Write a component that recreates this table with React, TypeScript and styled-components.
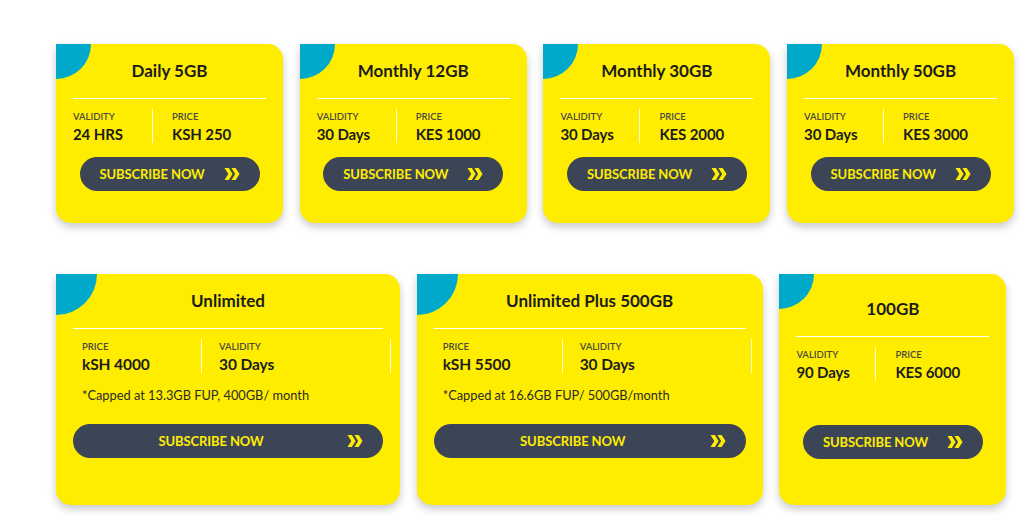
import React from "react";
import styled, { createGlobalStyle } from "styled-components";

const Global = createGlobalStyle`
  html, body { margin: 0; padding: 0; background: #ffffff; }
  body { font-family: Lato, "Open Sans", Arial, sans-serif; }
  * { box-sizing: border-box; }
`;

const Page = styled.div`
  padding: 44px 0 25px 56px;
  display: flex;
  flex-direction: column;
  gap: 51px;
`;

const Row = styled.div`
  display: flex;
  gap: 16.7px;
`;

const Card = styled.div<{ $w: number; $h: number; $top: number; $corner: number }>`
  position: relative;
  width: ${(p) => p.$w}px;
  height: ${(p) => p.$h}px;
  flex: none;
  background: #ffed00;
  border-radius: 0 15px 15px 15px;
  box-shadow: 0 4px 9px rgba(0, 0, 0, 0.22);
  padding: ${(p) => p.$top}px 17px 0;
  display: flex;
  flex-direction: column;
  overflow: hidden;

  &::before {
    content: "";
    position: absolute;
    left: -${(p) => p.$corner}px;
    top: -${(p) => p.$corner}px;
    width: ${(p) => p.$corner * 2}px;
    height: ${(p) => p.$corner * 2}px;
    border-radius: 50%;
    background: #00a9c9;
  }
`;

const Title = styled.h3`
  margin: 0 0 16px;
  font-size: 17px;
  line-height: 22px;
  font-weight: 700;
  color: #1c1c1c;
  text-align: center;
`;

const Divider = styled.div`
  height: 1px;
  background: #ffffff;
  margin-bottom: 10px;
`;

const Info = styled.div`
  display: flex;
`;

const Col = styled.div<{ $w: number; $pl: number; $line?: boolean }>`
  width: ${(p) => p.$w}px;
  flex: none;
  padding: 2px 0 0 ${(p) => p.$pl}px;
  height: 34px;
  border-right: ${(p) => (p.$line ? "1.5px solid rgba(255,255,255,0.85)" : "none")};
`;

const Label = styled.div`
  font-size: 9.5px;
  line-height: 12px;
  font-weight: 600;
  color: #4a4a40;
  text-transform: uppercase;
  margin-bottom: 2px;
`;

const Value = styled.div<{ $big?: boolean }>`
  font-size: ${(p) => (p.$big ? "15.5px" : "15px")};
  line-height: 18px;
  font-weight: 700;
  color: #1c1c1c;
  white-space: nowrap;
  letter-spacing: -0.1px;
`;

const Note = styled.div`
  margin-top: 14px;
  padding-left: 9px;
  font-size: 12.8px;
  line-height: 16px;
  color: #2a2a2a;
`;

const Button = styled.button<{ $full?: boolean; $mt: number }>`
  margin: ${(p) => p.$mt}px auto 0;
  width: ${(p) => (p.$full ? "100%" : "180px")};
  height: 34px;
  border: none;
  border-radius: 17px;
  background: #3c4555;
  color: #ffed00;
  font-family: Lato, Arial, sans-serif;
  font-weight: 700;
  font-size: 13px;
  display: flex;
  align-items: center;
  justify-content: space-between;
  padding: 0 20px;
  gap: 18px;
  cursor: pointer;
`;

const ButtonText = styled.span<{ $center?: boolean }>`
  flex: ${(p) => (p.$center ? 1 : "none")};
  text-align: center;
  letter-spacing: -0.1px;
`;

const Chevrons = () => (
  <svg width="16" height="12" viewBox="0 0 16 12" fill="#ffed00">
    <path d="M0.5 0 H4.8 L8.6 6 L4.8 12 H0.5 L4.3 6 Z" />
    <path d="M7.4 0 H11.7 L15.5 6 L11.7 12 H7.4 L11.2 6 Z" />
  </svg>
);

type Small = { title: string; validity: string; price: string };

const smallPlans: Small[] = [
  { title: "Daily 5GB", validity: "24 HRS", price: "KSH 250" },
  { title: "Monthly 12GB", validity: "30 Days", price: "KES 1000" },
  { title: "Monthly 30GB", validity: "30 Days", price: "KES 2000" },
  { title: "Monthly 50GB", validity: "30 Days", price: "KES 3000" },
];

const SmallCard = ({ p, h = 179, top = 16, btnTop = 14 }: { p: Small; h?: number; top?: number; btnTop?: number }) => (
  <Card $w={227} $h={h} $top={top} $corner={35}>
    <Title>{p.title}</Title>
    <Divider />
    <Info>
      <Col $w={80} $pl={0} $line>
        <Label>Validity</Label>
        <Value>{p.validity}</Value>
      </Col>
      <Col $w={110} $pl={19}>
        <Label>Price</Label>
        <Value>{p.price}</Value>
      </Col>
    </Info>
    <Button $mt={btnTop}>
      <ButtonText>SUBSCRIBE NOW</ButtonText>
      <Chevrons />
    </Button>
  </Card>
);

type Wide = { title: string; price: string; note: string; w: number };

const widePlans: Wide[] = [
  { title: "Unlimited", price: "kSH 4000", note: "*Capped at 13.3GB FUP, 400GB/ month", w: 344 },
  { title: "Unlimited Plus 500GB", price: "kSH 5500", note: "*Capped at 16.6GB FUP/ 500GB/month", w: 346 },
];

const WideCard = ({ p }: { p: Wide }) => (
  <Card $w={p.w} $h={231} $top={16} $corner={41}>
    <Title>{p.title}</Title>
    <Divider />
    <Info>
      <Col $w={129} $pl={9} $line>
        <Label>Price</Label>
        <Value $big>{p.price}</Value>
      </Col>
      <Col $w={189} $pl={17} $line>
        <Label>Validity</Label>
        <Value $big>30 Days</Value>
      </Col>
    </Info>
    <Note>{p.note}</Note>
    <Button $full $mt={21}>
      <ButtonText $center>SUBSCRIBE NOW</ButtonText>
      <Chevrons />
    </Button>
  </Card>
);

export default function App() {
  return (
    <>
      <Global />
      <Page>
        <Row>
          {smallPlans.map((p) => (
            <SmallCard key={p.title} p={p} />
          ))}
        </Row>
        <Row>
          {widePlans.map((p) => (
            <WideCard key={p.title} p={p} />
          ))}
          <SmallCard p={{ title: "100GB", validity: "90 Days", price: "KES 6000" }} h={231} top={24} btnTop={44} />
        </Row>
      </Page>
    </>
  );
}
